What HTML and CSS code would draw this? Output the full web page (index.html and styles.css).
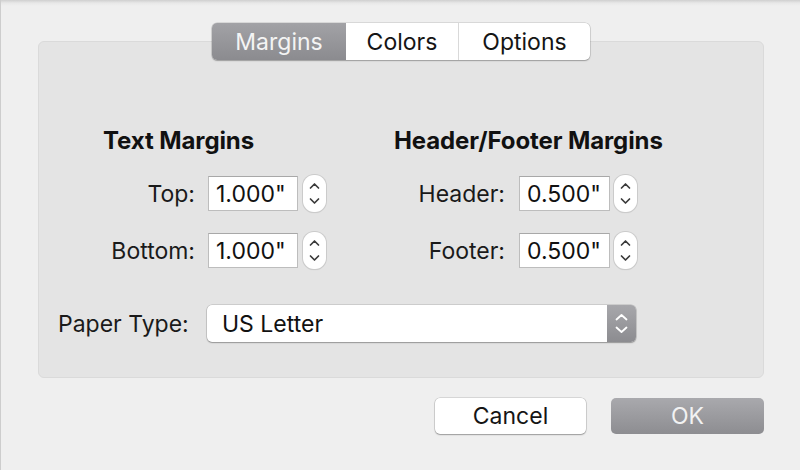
FILE: index.html
```html
<!DOCTYPE html>
<html>
<head>
<meta charset="utf-8">
<link rel="stylesheet" href="styles.css">
</head>
<body>
<div class="window">
  <div class="tabs">
    <div class="tab tab-selected tab-margins">Margins</div>
    <div class="tab tab-colors">Colors</div>
    <div class="tab tab-options">Options</div>
  </div>
  <div class="panel">
    <div class="sections">
      <div class="section section-left">
        <div class="heading">Text Margins</div>
        <div class="row">
          <div class="label">Top:</div>
          <div class="field">1.000"</div>
          <div class="stepper">
            <svg width="23" height="37" viewBox="0 0 23 37"><polyline points="7.5,13 11.5,9 15.5,13" class="chev"/><polyline points="7.5,24 11.5,28 15.5,24" class="chev"/></svg>
          </div>
        </div>
        <div class="row">
          <div class="label">Bottom:</div>
          <div class="field">1.000"</div>
          <div class="stepper">
            <svg width="23" height="37" viewBox="0 0 23 37"><polyline points="7.5,13 11.5,9 15.5,13" class="chev"/><polyline points="7.5,24 11.5,28 15.5,24" class="chev"/></svg>
          </div>
        </div>
      </div>
      <div class="section section-right">
        <div class="heading">Header/Footer Margins</div>
        <div class="row">
          <div class="label">Header:</div>
          <div class="field">0.500"</div>
          <div class="stepper">
            <svg width="23" height="37" viewBox="0 0 23 37"><polyline points="7.5,13 11.5,9 15.5,13" class="chev"/><polyline points="7.5,24 11.5,28 15.5,24" class="chev"/></svg>
          </div>
        </div>
        <div class="row">
          <div class="label">Footer:</div>
          <div class="field">0.500"</div>
          <div class="stepper">
            <svg width="23" height="37" viewBox="0 0 23 37"><polyline points="7.5,13 11.5,9 15.5,13" class="chev"/><polyline points="7.5,24 11.5,28 15.5,24" class="chev"/></svg>
          </div>
        </div>
      </div>
    </div>
    <div class="paper-row">
      <div class="paper-label">Paper Type:</div>
      <div class="select">
        <div class="select-value">US Letter</div>
        <div class="select-arrows">
          <svg width="29" height="37" viewBox="0 0 29 37"><polyline points="9.5,14.5 14.5,10 19.5,14.5" class="chev-white"/><polyline points="9.5,22.5 14.5,27 19.5,22.5" class="chev-white"/></svg>
        </div>
      </div>
    </div>
  </div>
  <div class="buttons">
    <div class="btn btn-cancel">Cancel</div>
    <div class="btn btn-ok">OK</div>
  </div>
</div>
</body>
</html>
```

FILE: styles.css
```css
html, body {
  margin: 0;
  padding: 0;
}
body {
  font-family: "Inter", "Roboto", "Liberation Sans", sans-serif;
  color: #1a1a1a;
  background: #efefef;
}
.window {
  width: 800px;
  height: 470px;
  box-sizing: border-box;
  padding-top: 23px;
  border-left: 1px solid #cdcdcd;
  background: linear-gradient(#cfcfcf, #e8e8e8 3px, #efefef 6px, #efefef);
  overflow: hidden;
}
.tabs {
  display: flex;
  margin-left: 211px;
  width: 378px;
  height: 37px;
  border-radius: 5px;
  background: #fff;
  box-shadow: 0 0 0 0.5px rgba(0,0,0,0.18), 0 1px 1.5px rgba(0,0,0,0.25);
  position: relative;
  z-index: 1;
  margin-bottom: -19px;
  overflow: hidden;
}
.tab {
  display: flex;
  align-items: center;
  justify-content: center;
  font-size: 23px;
  color: #151515;
}
.tab-margins { width: 134px; }
.tab-colors { width: 113px; border-right: 1px solid #d9d9d9; box-sizing: border-box; }
.tab-options { width: 131px; }
.tab-selected {
  background: linear-gradient(#a2a2a6, #8b8b8f);
  color: #f4f4f4;
}
.panel {
  margin-left: 37px;
  width: 726px;
  height: 337px;
  box-sizing: border-box;
  background: #e4e4e4;
  border: 1px solid #dadada;
  border-radius: 6px;
  padding-top: 85px;
}
.sections {
  display: flex;
  padding-left: 64px;
  gap: 68px;
}
.section {
  display: flex;
  flex-direction: column;
  gap: 20px;
}
.heading {
  font-size: 24px;
  font-weight: 700;
  line-height: 28px;
  color: #111;
  letter-spacing: -0.1px;
}
.row {
  display: flex;
  align-items: center;
}
.label {
  font-size: 23px;
  text-align: right;
  color: #1a1a1a;
}
.section-left .label { width: 92px; }
.section-left .field { width: 90px; margin-left: 13px; }
.section-left .stepper { margin-left: 5px; }
.section-right .label { width: 111px; }
.section-right .field { width: 91px; margin-left: 14px; }
.section-right .stepper { margin-left: 4px; }
.field {
  height: 35px;
  box-sizing: border-box;
  background: #fff;
  border: 1px solid #bdbdbd;
  border-top-color: #a8a8a8;
  font-size: 23px;
  padding-left: 7px;
  display: flex;
  align-items: center;
  color: #111;
}
.stepper {
  width: 23px;
  height: 37px;
  box-sizing: border-box;
  background: #fff;
  border-radius: 11px;
  box-shadow: 0 0 0 1px #cbcbcb, 0 1px 1px rgba(0,0,0,0.12);
  display: flex;
}
.chev {
  fill: none;
  stroke: #3a3a3a;
  stroke-width: 1.7;
  stroke-linecap: round;
  stroke-linejoin: round;
}
.chev-white {
  fill: none;
  stroke: #ffffff;
  stroke-width: 1.8;
  stroke-linecap: round;
  stroke-linejoin: round;
}
.paper-row {
  display: flex;
  align-items: center;
  margin-top: 36px;
  padding-left: 19px;
}
.paper-label {
  width: 149px;
  font-size: 23px;
  color: #1a1a1a;
}
.select {
  width: 429px;
  height: 37px;
  display: flex;
  border-radius: 5px;
  background: #fff;
  box-shadow: 0 0 0 0.5px rgba(0,0,0,0.2), 0 1px 1.5px rgba(0,0,0,0.28);
  overflow: hidden;
}
.select-value {
  flex: 1;
  display: flex;
  align-items: center;
  padding-left: 15px;
  font-size: 23px;
  color: #111;
}
.select-arrows {
  width: 29px;
  height: 37px;
  background: linear-gradient(#a7a7ab, #8c8c90);
  display: flex;
}
.buttons {
  display: flex;
  justify-content: flex-end;
  gap: 25px;
  width: 726px;
  margin-left: 37px;
  margin-top: 20px;
}
.btn {
  height: 36px;
  border-radius: 5px;
  display: flex;
  align-items: center;
  justify-content: center;
  font-size: 23px;
}
.btn-cancel {
  width: 151px;
  background: #fff;
  color: #151515;
  box-shadow: 0 0 0 0.5px rgba(0,0,0,0.2), 0 1px 1.5px rgba(0,0,0,0.28);
}
.btn-ok {
  width: 153px;
  background: linear-gradient(#a9a9ad, #8d8d91);
  color: #f2f2f2;
}
```
